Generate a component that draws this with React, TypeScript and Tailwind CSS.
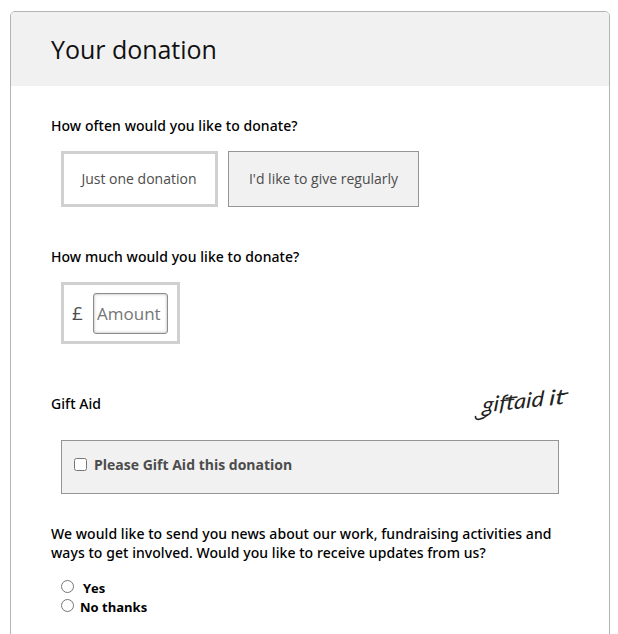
import { useState } from "react";

const FONT = "font-['Open_Sans','Noto_Sans',sans-serif]";

function Question({ children, className = "" }: { children: React.ReactNode; className?: string }) {
  return (
    <h2 className={`font-['Noto_Sans','Open_Sans',sans-serif] text-[14px] leading-[19px] font-medium tracking-[0.06px] whitespace-nowrap text-black ${className}`}>
      {children}
    </h2>
  );
}

function GiftAidLogo() {
  return (
    <svg width="100" height="44" viewBox="0 0 100 44" className="overflow-visible" role="img" aria-label="giftaid it">
      <path d="M7.500 31.500 C7 36 14 35 19.500 30" fill="none" stroke="#222" strokeWidth="1.600" strokeLinecap="round" />
      <g transform="translate(14 27.500) rotate(-6) skewX(-10)" className="fill-[#222] font-['Lato','Open_Sans',sans-serif] text-[21px] italic">
        <text textLength="62" lengthAdjust="spacingAndGlyphs">giftaid</text>
        <text x="67" textLength="16" lengthAdjust="spacingAndGlyphs">it</text>
      </g>
      <path d="M38 13.500 L49 12 M92 9.500 L100 8" stroke="#222" strokeWidth="1.300" strokeLinecap="round" />
    </svg>
  );
}

export default function App() {
  const [amount, setAmount] = useState("");
  return (
    <div className={`h-[634px] overflow-hidden bg-white pt-[11px] pl-[10px] ${FONT}`}>
      <main className="h-[660px] w-[600px] overflow-hidden rounded-[5px] border border-[#b3b5b5] bg-white">
        <header className="flex h-[74px] items-center bg-[#f1f1f1] pl-10">
          <h1 className="text-[25px] leading-[34px] font-normal tracking-[-0.03px] whitespace-nowrap text-[#111]">Your donation</h1>
        </header>

        <div className="pl-10">
          <section className="pt-[30px]">
            <Question>How often would you like to donate?</Question>
            <div className="mt-4 ml-[10px] flex gap-[10px] text-[14px] leading-[19px] whitespace-nowrap text-[#4c4c4c]">
              <button className="h-14 w-[157px] border-[3px] border-[#d0d0d0] bg-white pr-px pb-[2px]">Just one donation</button>
              <button className="h-14 w-[191px] border border-[#939598] bg-[#f1f1f1] pb-[2px]">I'd like to give regularly</button>
            </div>
          </section>

          <section className="pt-10">
            <Question>How much would you like to donate?</Question>
            <div className="mt-4 ml-[10px] flex h-[62px] w-[119px] items-center border-[3px] border-[#d0d0d0] pl-2 text-[#4c4c4c]">
              <span className="w-[21px] text-[19px] leading-6">£</span>
              <input
                aria-label="Amount"
                placeholder="Amount"
                value={amount}
                onChange={(e) => setAmount(e.target.value)}
                className="h-[41px] w-[75px] rounded-[3px] border border-[#8c8c8c] pl-[3px] text-[17px] shadow-[inset_0_0_3px_#aaa] outline-none placeholder:text-[#757575]"
              />
            </div>
          </section>

          <section className="pt-[41px]">
            <div className="flex h-[55px] w-[517px] items-start justify-between">
              <Question className="mt-[9px]">Gift Aid</Question>
              <GiftAidLogo />
            </div>
            <label className="ml-[10px] flex h-[54px] w-[498px] items-center border border-[#939598] bg-[#f1f1f1] pb-[5px] pl-3">
              <input
                type="checkbox"
                className="h-[13px] w-[13px] appearance-none rounded-[2.5px] border border-[#767676] bg-white checked:bg-[#0075ff]"
              />
              <span className="ml-[7px] text-[14px] leading-[19px] font-bold whitespace-nowrap text-[#4c4c4c]">
                Please Gift Aid this donation
              </span>
            </label>
          </section>

          <section className="pt-[30px]">
            <Question>
              We would like to send you news about our work, fundraising activities and
              <br />
              ways to get involved. Would you like to receive updates from us?
            </Question>
            <div className="mt-[17px] ml-[10px] text-[13px] leading-[19px] font-bold text-black">
              <label className="flex h-[19px] items-start">
                <input type="radio" name="updates" className="mt-px h-[13px] w-[13px] appearance-none rounded-full border border-[#767676] checked:bg-[#0075ff]" />
                <span className="ml-[9px]">Yes</span>
              </label>
              <label className="flex h-[19px] items-start">
                <input type="radio" name="updates" className="mt-px h-[13px] w-[13px] appearance-none rounded-full border border-[#767676] checked:bg-[#0075ff]" />
                <span className="ml-[6px]">No thanks</span>
              </label>
            </div>
          </section>
        </div>
      </main>
    </div>
  );
}
